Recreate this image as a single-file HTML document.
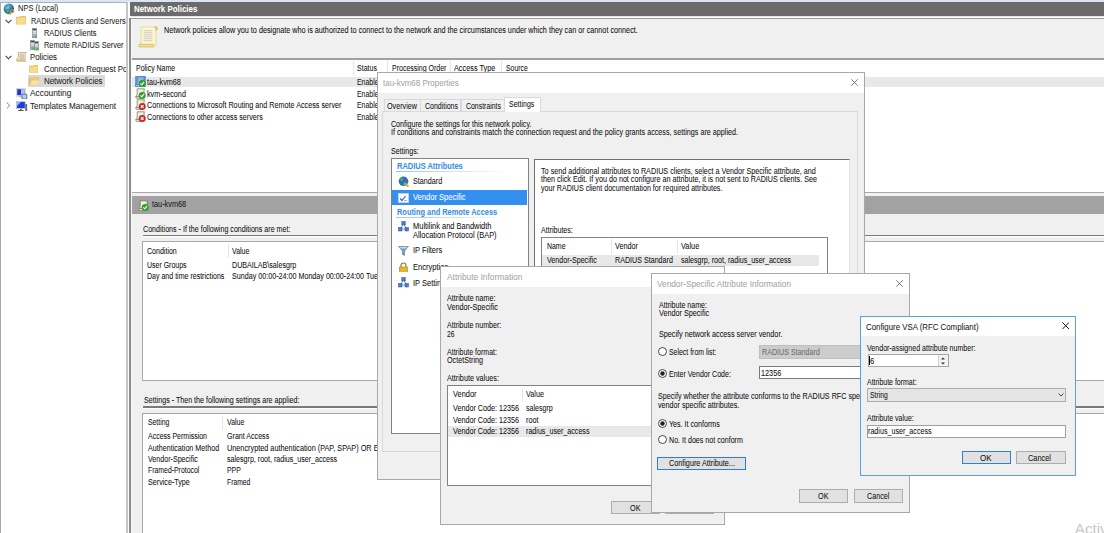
<!DOCTYPE html>
<html><head><meta charset="utf-8"><style>
html,body{margin:0;padding:0;}
body{width:1104px;height:533px;position:relative;overflow:hidden;background:#fff;font-family:'Liberation Sans', sans-serif;}
.b{position:absolute;}
.t{position:absolute;white-space:pre;line-height:1;transform-origin:0 0;-webkit-text-stroke:0.06px currentColor;}
</style></head><body>
<div class="b" style="left:0px;top:0px;width:1104px;height:1.5px;background:#dbe6f2;"></div>
<div class="b" style="left:0px;top:1.5px;width:1104px;height:0.8px;background:#a9b0b8;"></div>
<div class="b" style="left:0px;top:2px;width:1.2px;height:531px;background:#a8a8a8;"></div>
<div class="b" style="left:125.9px;top:2px;width:2.1px;height:531px;background:#c3c5ca;"></div>
<div class="b" style="left:128px;top:2px;width:1.6px;height:531px;background:#ffffff;"></div>
<div class="b" style="left:27.6px;top:75.2px;width:77px;height:12.1px;background:#d9d9d9;"></div>
<span class="t" style="left:17.90px;top:4.41px;font-size:9.2px;color:#1e1e1e;transform:scaleX(0.8136);">NPS (Local)</span>
<span class="t" style="left:31.00px;top:16.51px;font-size:9.2px;color:#1e1e1e;transform:scaleX(0.8055);">RADIUS Clients and Servers</span>
<span class="t" style="left:43.50px;top:28.61px;font-size:9.2px;color:#1e1e1e;transform:scaleX(0.8033);">RADIUS Clients</span>
<div class="b" style="left:0px;top:37.81px;width:124.5px;height:14.72px;overflow:hidden"><div class="b" style="left:0px;top:-37.81px"><span class="t" style="left:43.50px;top:40.81px;font-size:9.2px;color:#1e1e1e;transform:scaleX(0.8025);">Remote RADIUS Server</span></div></div>
<span class="t" style="left:30.40px;top:52.91px;font-size:9.2px;color:#1e1e1e;transform:scaleX(0.8525);">Policies</span>
<div class="b" style="left:0px;top:62.11px;width:126.3px;height:14.72px;overflow:hidden"><div class="b" style="left:0px;top:-62.11px"><span class="t" style="left:43.50px;top:65.11px;font-size:9.2px;color:#1e1e1e;transform:scaleX(0.8604);">Connection Request Po</span></div></div>
<span class="t" style="left:43.50px;top:77.21px;font-size:9.2px;color:#1e1e1e;transform:scaleX(0.8615);">Network Policies</span>
<span class="t" style="left:30.40px;top:89.41px;font-size:9.2px;color:#1e1e1e;transform:scaleX(0.9083);">Accounting</span>
<span class="t" style="left:30.40px;top:101.51px;font-size:9.2px;color:#1e1e1e;transform:scaleX(0.8770);">Templates Management</span>
<svg class="b" style="left:4.699999999999999px;top:18.7px;" width="7" height="5" viewBox="0 0 7 5"><path d="M0.6 0.8 L3.5 3.8 L6.4 0.8" fill="none" stroke="#404040" stroke-width="1.1"/></svg>
<svg class="b" style="left:4.699999999999999px;top:55.1px;" width="7" height="5" viewBox="0 0 7 5"><path d="M0.6 0.8 L3.5 3.8 L6.4 0.8" fill="none" stroke="#404040" stroke-width="1.1"/></svg>
<svg class="b" style="left:5.9px;top:102.3px;" width="5" height="7" viewBox="0 0 5 7"><path d="M0.8 0.6 L3.8 3.5 L0.8 6.4" fill="none" stroke="#808080" stroke-width="1"/></svg>
<svg class="b" style="left:3px;top:3px;" width="12" height="12" viewBox="0 0 12 12"><defs><radialGradient id="gg" cx="0.35" cy="0.3" r="0.75"><stop offset="0" stop-color="#a8d4ff"/><stop offset="0.5" stop-color="#2f78d0"/><stop offset="1" stop-color="#1a3f8a"/></radialGradient></defs><circle cx="5.8" cy="5.8" r="5.2" fill="url(#gg)"/><path d="M2 3.2 Q3.5 1.5 5.5 2.2 Q5 4 3.5 4.6 Q2.3 5 1.4 4.5 Z M3.5 7 Q5.5 6.2 6.8 7.8 Q6 10.5 4 10.2 Q2.8 9 3.5 7 Z M7.5 2.5 Q9.5 3 9.8 4.5 Q8.5 4.8 7.6 3.8 Z" fill="#3fb84a"/><circle cx="9.3" cy="8.2" r="1.5" fill="none" stroke="#e3a53a" stroke-width="1.1"/><path d="M8.2 9.3 L5.8 11.5 M6.8 10.6 L7.6 11.4" stroke="#e3a53a" stroke-width="1.2"/></svg>
<svg class="b" style="left:16px;top:16.2px;" width="10" height="8.5" viewBox="0 0 10 8.5"><path d="M0.5 1.2 H4 L5 0.3 H9.5 V8.0 H0.5 Z" fill="#f3d27a" stroke="#d9b45a" stroke-width="0.8"/><rect x="0.5" y="2" width="9.0" height="6.0" fill="#f7dc8c"/></svg>
<svg class="b" style="left:29px;top:64.9px;" width="9.3" height="8.3" viewBox="0 0 9.3 8.3"><path d="M0.5 1.2 H4 L5 0.3 H8.8 V7.800000000000001 H0.5 Z" fill="#f3d27a" stroke="#d9b45a" stroke-width="0.8"/><rect x="0.5" y="2" width="8.3" height="5.8" fill="#f7dc8c"/></svg>
<svg class="b" style="left:29px;top:76.6px;" width="10.3" height="8.8" viewBox="0 0 10.3 8.8"><path d="M0.5 1.2 H4 L5 0.3 H9.8 V8.3 H0.5 Z" fill="#f3d27a" stroke="#d9b45a" stroke-width="0.8"/><path d="M0.5 8.3 L2.5 3 H10.8 L9.8 8.3 Z" fill="#fbe49c" stroke="#d9b45a" stroke-width="0.6"/></svg>
<svg class="b" style="left:31.9px;top:28px;" width="5.2" height="10.2" viewBox="0 0 5.2 10.2"><rect x="0.4" y="0.4" width="4.4" height="9.399999999999999" fill="#a9b0b8" stroke="#7d858e" stroke-width="0.6"/><rect x="0.9" y="0.9" width="3.4000000000000004" height="1.4" fill="#3e4650"/><rect x="0.9" y="2.8" width="3.4000000000000004" height="1" fill="#f4f6f8"/><rect x="0.9" y="4.6" width="3.4000000000000004" height="1" fill="#f4f6f8"/><rect x="2.6" y="7.6" width="2" height="2" fill="#36c036"/></svg>
<svg class="b" style="left:30.1px;top:40.1px;" width="5" height="10" viewBox="0 0 5 10"><rect x="0.4" y="0.4" width="4.2" height="9.2" fill="#a9b0b8" stroke="#7d858e" stroke-width="0.6"/><rect x="0.9" y="0.9" width="3.2" height="1.4" fill="#3e4650"/><rect x="0.9" y="2.8" width="3.2" height="1" fill="#f4f6f8"/><rect x="0.9" y="4.6" width="3.2" height="1" fill="#f4f6f8"/><rect x="2.4" y="7.4" width="2" height="2" fill="#36c036"/></svg>
<svg class="b" style="left:34px;top:41px;" width="4.8" height="9.5" viewBox="0 0 4.8 9.5"><rect x="0.4" y="0.4" width="4.0" height="8.7" fill="#a9b0b8" stroke="#7d858e" stroke-width="0.6"/><rect x="0.9" y="0.9" width="3.0" height="1.4" fill="#3e4650"/><rect x="0.9" y="2.8" width="3.0" height="1" fill="#f4f6f8"/><rect x="0.9" y="4.6" width="3.0" height="1" fill="#f4f6f8"/><rect x="2.1999999999999997" y="6.9" width="2" height="2" fill="#36c036"/></svg>
<svg class="b" style="left:16.4px;top:52px;" width="10.8" height="10" viewBox="0 0 10.8 10"><path d="M2.3760000000000003 0.5 H10.3 L9.18 2.0 V8.2 H0.5 Q1.08 6.0 2.3760000000000003 5.0 Z" fill="#f3ebc8" stroke="#bfae78" stroke-width="0.8"/><path d="M0.5 8.2 H8.64 L9.72 9.5 H1.5 Z" fill="#e9dca8" stroke="#bfae78" stroke-width="0.6"/><rect x="3.4560000000000004" y="1.7999999999999998" width="4.5360000000000005" height="0.6" fill="#b8b0a0"/><rect x="3.4560000000000004" y="2.8" width="4.5360000000000005" height="0.6" fill="#b8b0a0"/><rect x="3.4560000000000004" y="3.8" width="4.5360000000000005" height="0.6" fill="#b8b0a0"/><rect x="3.4560000000000004" y="4.8" width="4.5360000000000005" height="0.6" fill="#b8b0a0"/><rect x="3.4560000000000004" y="5.8" width="4.5360000000000005" height="0.6" fill="#b8b0a0"/><rect x="3.4560000000000004" y="6.8" width="4.5360000000000005" height="0.6" fill="#b8b0a0"/></svg>
<svg class="b" style="left:16px;top:87.8px;" width="11.5" height="11.5" viewBox="0 0 11.5 11.5"><rect x="0.3" y="0.3" width="9" height="8" fill="#efe9d8" stroke="#c9c2ad" stroke-width="0.5"/><rect x="1.2" y="1.2" width="7.2" height="6" fill="#1d35d8"/><rect x="5" y="1.2" width="3.4" height="6" fill="#a9c2f5"/><rect x="3" y="8.3" width="3.5" height="1.2" fill="#bbb"/><rect x="5.8" y="6" width="5.2" height="5.2" rx="0.6" fill="#7f9cc8" stroke="#4a6290" stroke-width="0.5"/><rect x="6.8" y="7" width="3.2" height="3.2" fill="#b9cce8"/></svg>
<svg class="b" style="left:16px;top:100.8px;" width="11.5" height="10.5" viewBox="0 0 11.5 10.5"><rect x="0.3" y="0.3" width="9.2" height="7.4" fill="#dfe6ee" stroke="#9aa4b0" stroke-width="0.5"/><rect x="1" y="1" width="7.8" height="6" fill="#1e3fe0"/><path d="M1 1 H5 L1 5 Z" fill="#8fb0ff"/><rect x="4" y="7.8" width="1.8" height="1.2" fill="#666"/><rect x="2.2" y="9" width="5.4" height="1" fill="#555"/><rect x="9.2" y="3" width="1.9" height="7" fill="#6b6e72"/></svg>
<div class="b" style="left:129.6px;top:1.7px;width:974.4px;height:14.1px;background:#6b6b6b;"></div>
<span class="t" style="left:134.20px;top:4.81px;font-size:9.2px;color:#ffffff;font-weight:bold;transform:scaleX(0.8609);">Network Policies</span>
<div class="b" style="left:131px;top:15.8px;width:973px;height:1.7px;background:#e6e6e6;"></div>
<div class="b" style="left:131px;top:17.5px;width:973px;height:1px;background:#9a9a9a;"></div>
<div class="b" style="left:131.2px;top:18.5px;width:973px;height:40px;background:#f0f0f0;"></div>
<div class="b" style="left:131.2px;top:58.4px;width:973px;height:1.3px;background:#a0a0a0;"></div>
<svg class="b" style="left:138px;top:25.5px;" width="21" height="22" viewBox="0 0 21 22"><rect x="3" y="1" width="15" height="18" fill="#fbf6d2" stroke="#e3d595" stroke-width="0.8"/><path d="M16.5 0.8 Q20 0.5 19.5 3 Q19 5 17.5 4.5" fill="#e6cf6a" stroke="#cbb24a" stroke-width="0.6"/><path d="M1 18.3 H15.5 Q16.5 19.5 15.5 21 H1.5 Q0 19.6 1 18.3 Z" fill="#f2df86" stroke="#d0ba58" stroke-width="0.7"/><rect x="5.6" y="4.4" width="8.8" height="0.75" fill="#c0bec4"/><rect x="5.6" y="6.4" width="8.8" height="0.75" fill="#c0bec4"/><rect x="5.6" y="8.4" width="8.8" height="0.75" fill="#c0bec4"/><rect x="5.6" y="10.4" width="8.8" height="0.75" fill="#c0bec4"/><rect x="5.6" y="12.4" width="8.8" height="0.75" fill="#c0bec4"/><rect x="5.6" y="14.4" width="8.8" height="0.75" fill="#c0bec4"/></svg>
<span class="t" style="left:164.40px;top:26.40px;font-size:8.5px;color:#111;transform:scaleX(0.8512);">Network policies allow you to designate who is authorized to connect to the network and the circumstances under which they can or cannot connect.</span>
<span class="t" style="left:136.00px;top:64.40px;font-size:8.5px;color:#111;transform:scaleX(0.8215);">Policy Name</span>
<span class="t" style="left:357.20px;top:64.40px;font-size:8.5px;color:#111;transform:scaleX(0.8254);">Status</span>
<span class="t" style="left:391.60px;top:64.40px;font-size:8.5px;color:#111;transform:scaleX(0.8225);">Processing Order</span>
<span class="t" style="left:454.10px;top:64.40px;font-size:8.5px;color:#111;transform:scaleX(0.8596);">Access Type</span>
<span class="t" style="left:505.80px;top:64.40px;font-size:8.5px;color:#111;transform:scaleX(0.8056);">Source</span>
<div class="b" style="left:352.7px;top:60.5px;width:0.8px;height:15px;background:#e5e5e5;"></div>
<div class="b" style="left:387.1px;top:60.5px;width:0.8px;height:15px;background:#e5e5e5;"></div>
<div class="b" style="left:449.6px;top:60.5px;width:0.8px;height:15px;background:#e5e5e5;"></div>
<div class="b" style="left:501.2px;top:60.5px;width:0.8px;height:15px;background:#e5e5e5;"></div>
<div class="b" style="left:131.2px;top:76.5px;width:973px;height:10.5px;background:#e8e8e8;"></div>
<span class="t" style="left:146.50px;top:78.00px;font-size:8.5px;color:#111;transform:scaleX(0.8542);">tau-kvm68</span>
<span class="t" style="left:146.50px;top:89.60px;font-size:8.5px;color:#111;transform:scaleX(0.8488);">kvm-second</span>
<span class="t" style="left:146.50px;top:101.20px;font-size:8.5px;color:#111;transform:scaleX(0.8488);">Connections to Microsoft Routing and Remote Access server</span>
<span class="t" style="left:146.50px;top:112.60px;font-size:8.5px;color:#111;transform:scaleX(0.8416);">Connections to other access servers</span>
<span class="t" style="left:357.20px;top:78.00px;font-size:8.5px;color:#111;transform:scaleX(0.8123);">Enable</span>
<span class="t" style="left:357.20px;top:89.60px;font-size:8.5px;color:#111;transform:scaleX(0.8123);">Enable</span>
<span class="t" style="left:357.20px;top:101.20px;font-size:8.5px;color:#111;transform:scaleX(0.8123);">Enable</span>
<span class="t" style="left:357.20px;top:112.60px;font-size:8.5px;color:#111;transform:scaleX(0.8123);">Enable</span>
<svg class="b" style="left:135.4px;top:76.2px;" width="11" height="11" viewBox="0 0 11 11"><rect x="0" y="0" width="11" height="11" fill="#6d9fdc"/><path d="M2.2 0.8 H9.5 L9 2 V8.5 H1.2 Q2 7 2.2 6 Z" fill="#8fb6e6" stroke="#3f6fb0" stroke-width="0.7"/><path d="M0.5 8.5 H7.5 L8 10.5 H1.2 Z" fill="#a9c6ea" stroke="#3f6fb0" stroke-width="0.5"/><circle cx="7.2" cy="7.4" r="3.5" fill="#2aa02a"/><path d="M5.4 7.4 L6.8 8.9 L9.1 5.9" fill="none" stroke="#fff" stroke-width="1.1"/></svg>
<svg class="b" style="left:135.4px;top:87.8px;" width="11" height="11" viewBox="0 0 11 11"><path d="M2.2 0.8 H9.5 L9 2 V8.5 H1.2 Q2 7 2.2 6 Z" fill="#f1efe2" stroke="#6a6a5a" stroke-width="0.7"/><path d="M0.5 8.5 H7.5 L8 10.5 H1.2 Z" fill="#e3dcb8" stroke="#6a6a5a" stroke-width="0.5"/><circle cx="7.2" cy="7.4" r="3.5" fill="#2aa02a"/><path d="M5.4 7.4 L6.8 8.9 L9.1 5.9" fill="none" stroke="#fff" stroke-width="1.1"/></svg>
<svg class="b" style="left:135.4px;top:99.3px;" width="11" height="11" viewBox="0 0 11 11"><path d="M2.2 0.8 H9.5 L9 2 V8.5 H1.2 Q2 7 2.2 6 Z" fill="#f1efe2" stroke="#6a6a5a" stroke-width="0.7"/><path d="M0.5 8.5 H7.5 L8 10.5 H1.2 Z" fill="#e3dcb8" stroke="#6a6a5a" stroke-width="0.5"/><circle cx="7.2" cy="7.5" r="3.5" fill="#d02424"/><path d="M5.8 6.1 L8.6 8.9 M8.6 6.1 L5.8 8.9" stroke="#fff" stroke-width="1.1"/></svg>
<svg class="b" style="left:135.4px;top:110.9px;" width="11" height="11" viewBox="0 0 11 11"><path d="M2.2 0.8 H9.5 L9 2 V8.5 H1.2 Q2 7 2.2 6 Z" fill="#f1efe2" stroke="#6a6a5a" stroke-width="0.7"/><path d="M0.5 8.5 H7.5 L8 10.5 H1.2 Z" fill="#e3dcb8" stroke="#6a6a5a" stroke-width="0.5"/><circle cx="7.2" cy="7.5" r="3.5" fill="#d02424"/><path d="M5.8 6.1 L8.6 8.9 M8.6 6.1 L5.8 8.9" stroke="#fff" stroke-width="1.1"/></svg>
<div class="b" style="left:131.2px;top:58.4px;width:973px;height:133.6px;"></div>
<div class="b" style="left:131.2px;top:192px;width:973px;height:1px;background:#a8a8a8;"></div>
<div class="b" style="left:131.2px;top:193px;width:973px;height:2.5px;background:#f0f0f0;"></div>
<div class="b" style="left:131.2px;top:195.5px;width:973px;height:18.2px;background:#a2a2a2;"></div>
<svg class="b" style="left:138px;top:199.5px;" width="11" height="11" viewBox="0 0 11 11"><path d="M2.2 0.8 H9.5 L9 2 V8.5 H1.2 Q2 7 2.2 6 Z" fill="#f1efe2" stroke="#6a6a5a" stroke-width="0.7"/><path d="M0.5 8.5 H7.5 L8 10.5 H1.2 Z" fill="#e3dcb8" stroke="#6a6a5a" stroke-width="0.5"/><circle cx="7.2" cy="7.4" r="3.5" fill="#2aa02a"/><path d="M5.4 7.4 L6.8 8.9 L9.1 5.9" fill="none" stroke="#fff" stroke-width="1.1"/></svg>
<span class="t" style="left:151.80px;top:200.20px;font-size:8.5px;color:#1a1a1a;transform:scaleX(0.8617);">tau-kvm68</span>
<div class="b" style="left:131.2px;top:213.7px;width:973px;height:320px;background:#f0f0f0;"></div>
<span class="t" style="left:143.20px;top:224.60px;font-size:8.5px;color:#111;transform:scaleX(0.8364);">Conditions - If the following conditions are met:</span>
<div class="b" style="left:143px;top:234.6px;width:961px;height:1.4px;background:#7a7a7a;"></div>
<div class="b" style="left:143px;top:236px;width:961px;height:0.8px;background:#ffffff;"></div>
<div class="b" style="left:142.1px;top:241.2px;width:970px;height:140.3px;background:#ffffff;border:1px solid #a9a9a9;box-sizing:border-box;"></div>
<span class="t" style="left:147.30px;top:246.70px;font-size:8.5px;color:#111;transform:scaleX(0.8296);">Condition</span>
<span class="t" style="left:232.00px;top:246.70px;font-size:8.5px;color:#111;transform:scaleX(0.8243);">Value</span>
<div class="b" style="left:227.6px;top:244px;width:0.8px;height:14px;background:#e5e5e5;"></div>
<span class="t" style="left:147.30px;top:260.50px;font-size:8.5px;color:#111;transform:scaleX(0.8218);">User Groups</span>
<span class="t" style="left:232.00px;top:260.50px;font-size:8.5px;color:#111;transform:scaleX(0.8400);">DUBAILAB\salesgrp</span>
<span class="t" style="left:147.30px;top:272.10px;font-size:8.5px;color:#111;transform:scaleX(0.8274);">Day and time restrictions</span>
<span class="t" style="left:232.00px;top:272.10px;font-size:8.5px;color:#111;transform:scaleX(0.8418);">Sunday 00:00-24:00 Monday 00:00-24:00 Tue</span>
<span class="t" style="left:144.00px;top:396.00px;font-size:8.5px;color:#111;transform:scaleX(0.8375);">Settings - Then the following settings are applied:</span>
<div class="b" style="left:143px;top:406.2px;width:961px;height:1.4px;background:#7a7a7a;"></div>
<div class="b" style="left:143px;top:407.6px;width:961px;height:0.8px;background:#ffffff;"></div>
<div class="b" style="left:142.3px;top:412.8px;width:970px;height:130px;background:#ffffff;border:1px solid #a9a9a9;box-sizing:border-box;"></div>
<span class="t" style="left:148.00px;top:418.40px;font-size:8.5px;color:#111;transform:scaleX(0.8047);">Setting</span>
<span class="t" style="left:226.50px;top:418.40px;font-size:8.5px;color:#111;transform:scaleX(0.8243);">Value</span>
<div class="b" style="left:222.2px;top:416px;width:0.8px;height:14px;background:#e5e5e5;"></div>
<span class="t" style="left:148.00px;top:432.20px;font-size:8.5px;color:#111;transform:scaleX(0.8216);">Access Permission</span>
<span class="t" style="left:226.50px;top:432.20px;font-size:8.5px;color:#111;transform:scaleX(0.8346);">Grant Access</span>
<span class="t" style="left:148.00px;top:443.50px;font-size:8.5px;color:#111;transform:scaleX(0.8417);">Authentication Method</span>
<span class="t" style="left:226.50px;top:443.50px;font-size:8.5px;color:#111;transform:scaleX(0.8574);">Unencrypted authentication (PAP, SPAP) OR E</span>
<span class="t" style="left:148.00px;top:455.10px;font-size:8.5px;color:#111;transform:scaleX(0.8363);">Vendor-Specific</span>
<span class="t" style="left:226.50px;top:455.10px;font-size:8.5px;color:#111;transform:scaleX(0.8352);">salesgrp, root, radius_user_access</span>
<span class="t" style="left:148.00px;top:466.40px;font-size:8.5px;color:#111;transform:scaleX(0.8103);">Framed-Protocol</span>
<span class="t" style="left:226.50px;top:466.40px;font-size:8.5px;color:#111;transform:scaleX(0.8110);">PPP</span>
<span class="t" style="left:148.00px;top:478.10px;font-size:8.5px;color:#111;transform:scaleX(0.8426);">Service-Type</span>
<span class="t" style="left:226.50px;top:478.10px;font-size:8.5px;color:#111;transform:scaleX(0.7953);">Framed</span>
<div class="b" style="left:129.3px;top:17.5px;width:1.8px;height:516px;background:#8c8c8c;"></div>
<div class="b" style="left:131.1px;top:18.5px;width:0.9px;height:515px;background:#f7f7f7;"></div>
<div class="b" style="left:377px;top:72px;width:487.5px;height:407.5px;background:#f0f0f0;border:1px solid #a8a8a8;box-sizing:border-box;"></div>
<div class="b" style="left:378px;top:73px;width:485.5px;height:20px;background:#ffffff;"></div>
<span class="t" style="left:383.00px;top:78.55px;font-size:8.8px;color:#a6a6a6;transform:scaleX(0.9054);">tau-kvm68 Properties</span>
<svg class="b" style="left:850.6px;top:79.1px;" width="7" height="7" viewBox="0 0 7 7"><path d="M0.3 0.3 L6.7 6.7 M6.7 0.3 L0.3 6.7" stroke="#707070" stroke-width="0.9"/></svg>
<div class="b" style="left:382px;top:110.9px;width:476.2px;height:341.3px;background:#f0f0f0;border:1px solid #d9d9d9;box-sizing:border-box;"></div>
<div class="b" style="left:384px;top:98.8px;width:36.69999999999999px;height:13.2px;background:#f0f0f0;border:1px solid #d9d9d9;box-sizing:border-box;"></div>
<span class="t" style="left:386.70px;top:101.55px;font-size:8.8px;color:#111;transform:scaleX(0.8153);">Overview</span>
<div class="b" style="left:419.7px;top:98.8px;width:41.80000000000001px;height:13.2px;background:#f0f0f0;border:1px solid #d9d9d9;box-sizing:border-box;"></div>
<span class="t" style="left:424.80px;top:101.55px;font-size:8.8px;color:#111;transform:scaleX(0.7937);">Conditions</span>
<div class="b" style="left:460.5px;top:98.8px;width:44.5px;height:13.2px;background:#f0f0f0;border:1px solid #d9d9d9;box-sizing:border-box;"></div>
<span class="t" style="left:465.90px;top:101.55px;font-size:8.8px;color:#111;transform:scaleX(0.7865);">Constraints</span>
<div class="b" style="left:504px;top:97.1px;width:36.5px;height:14.9px;background:#ffffff;border:1px solid #d9d9d9;box-sizing:border-box;border-bottom:none;"></div>
<span class="t" style="left:509.40px;top:100.45px;font-size:8.8px;color:#111;transform:scaleX(0.7957);">Settings</span>
<span class="t" style="left:390.50px;top:119.65px;font-size:8.8px;color:#111;transform:scaleX(0.8050);">Configure the settings for this network policy.</span>
<span class="t" style="left:390.50px;top:127.95px;font-size:8.8px;color:#111;transform:scaleX(0.8185);">If conditions and constraints match the connection request and the policy grants access, settings are applied.</span>
<span class="t" style="left:390.50px;top:147.15px;font-size:8.8px;color:#111;transform:scaleX(0.8120);">Settings:</span>
<div class="b" style="left:391px;top:158.1px;width:138.2px;height:275.6px;background:#ffffff;border:1px solid #828282;box-sizing:border-box;"></div>
<span class="t" style="left:396.70px;top:161.65px;font-size:8.8px;color:#3a8ee6;font-weight:bold;transform:scaleX(0.8489);">RADIUS Attributes</span>
<div class="b" style="left:396px;top:170.8px;width:112px;height:1px;background:linear-gradient(90deg,#9cc6f0,#ffffff);"></div>
<svg class="b" style="left:397.7px;top:176px;" width="11.5" height="11" viewBox="0 0 11.5 11"><circle cx="5.5" cy="5.3" r="4.8" fill="#2d6cc0"/><path d="M2.5 2.3 Q4.5 1.3 5.5 3 Q4.5 5.3 2.5 5.3 Z M5.5 6.5 Q7.5 5.5 8.5 7.5 Q6.5 10 5 9.5 Z" fill="#4cbb3c"/><path d="M7 7.5 L10.5 10.5" stroke="#e0a030" stroke-width="1.8"/></svg>
<span class="t" style="left:412.80px;top:176.75px;font-size:8.8px;color:#111;transform:scaleX(0.8179);">Standard</span>
<div class="b" style="left:392.3px;top:189.6px;width:134.9px;height:15.6px;background:#3390ee;"></div>
<svg class="b" style="left:397.7px;top:193px;" width="11" height="10" viewBox="0 0 11 10"><rect x="0.5" y="0.5" width="10" height="9" fill="#ffffff" stroke="#c9d3e0" stroke-width="0.8"/><path d="M2.2 5.5 L4 7.5 L7.5 3" fill="none" stroke="#2466c4" stroke-width="1.2"/><rect x="6" y="7" width="3" height="0.8" fill="#999"/></svg>
<span class="t" style="left:412.80px;top:192.65px;font-size:8.8px;color:#ffffff;transform:scaleX(0.8587);">Vendor Specific</span>
<span class="t" style="left:396.70px;top:207.75px;font-size:8.8px;color:#3a8ee6;font-weight:bold;transform:scaleX(0.8423);">Routing and Remote Access</span>
<div class="b" style="left:396px;top:216.8px;width:112px;height:1px;background:linear-gradient(90deg,#9cc6f0,#ffffff);"></div>
<svg class="b" style="left:397.7px;top:221.4px;" width="11" height="11" viewBox="0 0 11 11"><path d="M5.5 2.5 L2.5 8 M5.5 2.5 L8.5 8 M2.5 8 H8.5" stroke="#6a7f9a" stroke-width="0.8" fill="none"/><rect x="3.8" y="0.5" width="3.5" height="3.5" fill="#4a7fd0" stroke="#2a4f90" stroke-width="0.5"/><rect x="0.5" y="6.5" width="3.5" height="3.5" fill="#4a7fd0" stroke="#2a4f90" stroke-width="0.5"/><rect x="7" y="6.5" width="3.5" height="3.5" fill="#4a7fd0" stroke="#2a4f90" stroke-width="0.5"/></svg>
<span class="t" style="left:412.80px;top:221.85px;font-size:8.8px;color:#111;transform:scaleX(0.8494);">Multilink and Bandwidth</span>
<span class="t" style="left:412.80px;top:230.55px;font-size:8.8px;color:#111;transform:scaleX(0.8464);">Allocation Protocol (BAP)</span>
<svg class="b" style="left:397.7px;top:246px;" width="11" height="10" viewBox="0 0 11 10"><path d="M0.5 0.5 H10.5 L6.5 5 V9.5 L4.5 8.5 V5 Z" fill="#7b9bbb" stroke="#5a7a9a" stroke-width="0.6"/><path d="M1.5 1 H9.5 L8 2.5 H3 Z" fill="#c8d8e8"/></svg>
<span class="t" style="left:412.80px;top:245.95px;font-size:8.8px;color:#111;transform:scaleX(0.8452);">IP Filters</span>
<svg class="b" style="left:399px;top:261.6px;" width="9" height="10.5" viewBox="0 0 9 10.5"><path d="M2 5 V3.5 A2.5 2.5 0 0 1 7 3.5 V5" fill="none" stroke="#8a7a40" stroke-width="1.2"/><rect x="0.5" y="5" width="8" height="5.3" fill="#e2b52a" stroke="#a88418" stroke-width="0.6"/></svg>
<span class="t" style="left:412.80px;top:262.55px;font-size:8.8px;color:#111;transform:scaleX(0.8589);">Encryption</span>
<svg class="b" style="left:397.7px;top:277px;" width="11" height="11" viewBox="0 0 11 11"><path d="M5.5 2.5 L2.5 8 M5.5 2.5 L8.5 8 M2.5 8 H8.5" stroke="#6a7f9a" stroke-width="0.8" fill="none"/><rect x="3.8" y="0.5" width="3.5" height="3.5" fill="#4a7fd0" stroke="#2a4f90" stroke-width="0.5"/><rect x="0.5" y="6.5" width="3.5" height="3.5" fill="#4a7fd0" stroke="#2a4f90" stroke-width="0.5"/><rect x="7" y="6.5" width="3.5" height="3.5" fill="#4a7fd0" stroke="#2a4f90" stroke-width="0.5"/></svg>
<span class="t" style="left:412.80px;top:278.55px;font-size:8.8px;color:#111;transform:scaleX(0.8492);">IP Settings</span>
<div class="b" style="left:533.6px;top:158.6px;width:316.2px;height:290px;background:#ffffff;border-top:1.6px solid #6e6e6e;border-left:1.6px solid #6e6e6e;border-right:1px solid #e3e3e3;box-sizing:border-box;"></div>
<span class="t" style="left:541.20px;top:166.75px;font-size:8.8px;color:#111;transform:scaleX(0.8204);">To send additional attributes to RADIUS clients, select a Vendor Specific attribute, and</span>
<span class="t" style="left:541.20px;top:175.35px;font-size:8.8px;color:#111;transform:scaleX(0.8168);">then click Edit. If you do not configure an attribute, it is not sent to RADIUS clients. See</span>
<span class="t" style="left:541.20px;top:183.65px;font-size:8.8px;color:#111;transform:scaleX(0.8082);">your RADIUS client documentation for required attributes.</span>
<span class="t" style="left:541.20px;top:226.05px;font-size:8.8px;color:#111;transform:scaleX(0.8028);">Attributes:</span>
<div class="b" style="left:541.2px;top:237.4px;width:287.3px;height:200px;background:#ffffff;border:1px solid #828282;box-sizing:border-box;"></div>
<span class="t" style="left:546.80px;top:242.25px;font-size:8.8px;color:#111;transform:scaleX(0.7883);">Name</span>
<span class="t" style="left:614.60px;top:242.25px;font-size:8.8px;color:#111;transform:scaleX(0.8246);">Vendor</span>
<span class="t" style="left:681.00px;top:242.25px;font-size:8.8px;color:#111;transform:scaleX(0.8372);">Value</span>
<div class="b" style="left:610.6px;top:239px;width:0.8px;height:15px;background:#e5e5e5;"></div>
<div class="b" style="left:677px;top:239px;width:0.8px;height:15px;background:#e5e5e5;"></div>
<div class="b" style="left:542.2px;top:254.7px;width:277px;height:11.5px;background:#e8e8e8;"></div>
<span class="t" style="left:546.80px;top:256.15px;font-size:8.8px;color:#111;transform:scaleX(0.8097);">Vendor-Specific</span>
<span class="t" style="left:614.60px;top:256.15px;font-size:8.8px;color:#111;transform:scaleX(0.8110);">RADIUS Standard</span>
<span class="t" style="left:681.00px;top:256.15px;font-size:8.8px;color:#111;transform:scaleX(0.8063);">salesgrp, root, radius_user_access</span>
<div class="b" style="left:440px;top:266px;width:284.5px;height:259px;background:#f0f0f0;border:1px solid #a8a8a8;box-sizing:border-box;"></div>
<div class="b" style="left:441px;top:267px;width:282.5px;height:19.5px;background:#ffffff;"></div>
<span class="t" style="left:446.90px;top:272.95px;font-size:8.8px;color:#a6a6a6;transform:scaleX(0.9518);">Attribute Information</span>
<span class="t" style="left:447.30px;top:294.05px;font-size:8.8px;color:#111;transform:scaleX(0.8130);">Attribute name:</span>
<span class="t" style="left:447.30px;top:302.65px;font-size:8.8px;color:#111;transform:scaleX(0.8260);">Vendor-Specific</span>
<span class="t" style="left:447.30px;top:320.85px;font-size:8.8px;color:#111;transform:scaleX(0.8046);">Attribute number:</span>
<span class="t" style="left:447.30px;top:329.75px;font-size:8.8px;color:#111;transform:scaleX(0.7656);">26</span>
<span class="t" style="left:447.30px;top:347.65px;font-size:8.8px;color:#111;transform:scaleX(0.7988);">Attribute format:</span>
<span class="t" style="left:447.30px;top:355.75px;font-size:8.8px;color:#111;transform:scaleX(0.8202);">OctetString</span>
<span class="t" style="left:447.30px;top:374.45px;font-size:8.8px;color:#111;transform:scaleX(0.8228);">Attribute values:</span>
<div class="b" style="left:447px;top:384.9px;width:270px;height:101.5px;background:#ffffff;border:1px solid #828282;box-sizing:border-box;"></div>
<span class="t" style="left:452.70px;top:390.15px;font-size:8.8px;color:#111;transform:scaleX(0.8426);">Vendor</span>
<span class="t" style="left:525.50px;top:390.15px;font-size:8.8px;color:#111;transform:scaleX(0.8234);">Value</span>
<div class="b" style="left:522px;top:388px;width:0.8px;height:14px;background:#e5e5e5;"></div>
<div class="b" style="left:448px;top:425.6px;width:268px;height:11.4px;background:#e8e8e8;"></div>
<span class="t" style="left:452.70px;top:404.15px;font-size:8.8px;color:#111;transform:scaleX(0.8189);">Vendor Code: 12356</span>
<span class="t" style="left:525.50px;top:404.15px;font-size:8.8px;color:#111;transform:scaleX(0.8056);">salesgrp</span>
<span class="t" style="left:452.70px;top:415.55px;font-size:8.8px;color:#111;transform:scaleX(0.8189);">Vendor Code: 12356</span>
<span class="t" style="left:525.50px;top:415.55px;font-size:8.8px;color:#111;transform:scaleX(0.8239);">root</span>
<span class="t" style="left:452.70px;top:427.15px;font-size:8.8px;color:#111;transform:scaleX(0.8189);">Vendor Code: 12356</span>
<span class="t" style="left:525.50px;top:427.15px;font-size:8.8px;color:#111;transform:scaleX(0.8115);">radius_user_access</span>
<div class="b" style="left:611px;top:500.7px;width:48.6px;height:13.8px;background:#e1e1e1;border:1px solid #adadad;box-sizing:border-box;"></div>
<span class="t" style="left:629.50px;top:503.75px;font-size:8.8px;color:#111;transform:scaleX(0.8256);">OK</span>
<div class="b" style="left:665.4px;top:500.7px;width:48.9px;height:13.8px;background:#e1e1e1;border:1px solid #adadad;box-sizing:border-box;"></div>
<div class="b" style="left:651.1px;top:272.8px;width:258.9px;height:240px;background:#f0f0f0;border:1px solid #a8a8a8;box-sizing:border-box;"></div>
<div class="b" style="left:652.1px;top:273.8px;width:256.9px;height:20.2px;background:#ffffff;"></div>
<span class="t" style="left:657.00px;top:279.65px;font-size:8.8px;color:#a6a6a6;transform:scaleX(0.9384);">Vendor-Specific Attribute Information</span>
<svg class="b" style="left:896.2px;top:279.7px;" width="7" height="7" viewBox="0 0 7 7"><path d="M0.3 0.3 L6.7 6.7 M6.7 0.3 L0.3 6.7" stroke="#707070" stroke-width="0.9"/></svg>
<span class="t" style="left:658.60px;top:301.05px;font-size:8.8px;color:#111;transform:scaleX(0.8046);">Attribute name:</span>
<span class="t" style="left:658.60px;top:309.15px;font-size:8.8px;color:#111;transform:scaleX(0.8211);">Vendor Specific</span>
<span class="t" style="left:658.60px;top:329.85px;font-size:8.8px;color:#111;transform:scaleX(0.8221);">Specify network access server vendor.</span>
<svg class="b" style="left:658.1px;top:347.3px;" width="9" height="9" viewBox="0 0 9 9"><circle cx="4.5" cy="4.5" r="4" fill="#ffffff" stroke="#333" stroke-width="0.9"/></svg>
<span class="t" style="left:669.40px;top:347.85px;font-size:8.8px;color:#111;transform:scaleX(0.7865);">Select from list:</span>
<div class="b" style="left:758.8px;top:345px;width:110px;height:13.8px;background:#cccccc;border:1px solid #bfbfbf;box-sizing:border-box;"></div>
<span class="t" style="left:761.70px;top:347.95px;font-size:8.8px;color:#6d6d6d;transform:scaleX(0.8110);">RADIUS Standard</span>
<svg class="b" style="left:658.1px;top:368.9px;" width="9" height="9" viewBox="0 0 9 9"><circle cx="4.5" cy="4.5" r="4" fill="#ffffff" stroke="#333" stroke-width="0.9"/><circle cx="4.5" cy="4.5" r="2.2" fill="#222"/></svg>
<span class="t" style="left:669.40px;top:369.75px;font-size:8.8px;color:#111;transform:scaleX(0.8010);">Enter Vendor Code:</span>
<div class="b" style="left:758.8px;top:366.4px;width:110px;height:13.1px;background:#ffffff;border:1px solid #7a7a7a;box-sizing:border-box;"></div>
<span class="t" style="left:760.60px;top:368.85px;font-size:8.8px;color:#111;transform:scaleX(0.8296);">12356</span>
<span class="t" style="left:658.20px;top:392.05px;font-size:8.8px;color:#111;transform:scaleX(0.8165);">Specify whether the attribute conforms to the RADIUS RFC spe</span>
<span class="t" style="left:658.20px;top:400.85px;font-size:8.8px;color:#111;transform:scaleX(0.8150);">vendor specific attributes.</span>
<svg class="b" style="left:658.1px;top:419.0px;" width="9" height="9" viewBox="0 0 9 9"><circle cx="4.5" cy="4.5" r="4" fill="#ffffff" stroke="#333" stroke-width="0.9"/><circle cx="4.5" cy="4.5" r="2.2" fill="#222"/></svg>
<span class="t" style="left:669.20px;top:419.65px;font-size:8.8px;color:#111;transform:scaleX(0.8096);">Yes. It conforms</span>
<svg class="b" style="left:658.1px;top:435.4px;" width="9" height="9" viewBox="0 0 9 9"><circle cx="4.5" cy="4.5" r="4" fill="#ffffff" stroke="#333" stroke-width="0.9"/></svg>
<span class="t" style="left:669.20px;top:435.95px;font-size:8.8px;color:#111;transform:scaleX(0.8082);">No. It does not conform</span>
<div class="b" style="left:657.3px;top:456.5px;width:88.7px;height:13.9px;background:#e1e1e1;border:1.3px solid #2f7bd6;box-sizing:border-box;"></div>
<span class="t" style="left:668.70px;top:459.35px;font-size:8.8px;color:#111;transform:scaleX(0.8217);">Configure Attribute...</span>
<div class="b" style="left:799.2px;top:489.4px;width:49.3px;height:13.9px;background:#e1e1e1;border:1px solid #adadad;box-sizing:border-box;"></div>
<span class="t" style="left:818.20px;top:492.25px;font-size:8.8px;color:#111;transform:scaleX(0.8256);">OK</span>
<div class="b" style="left:854.1px;top:489.4px;width:49.3px;height:13.9px;background:#e1e1e1;border:1px solid #adadad;box-sizing:border-box;"></div>
<span class="t" style="left:867.00px;top:492.25px;font-size:8.8px;color:#111;transform:scaleX(0.8141);">Cancel</span>
<div class="b" style="left:859.5px;top:315.7px;width:216.5px;height:160.6px;background:#f0f0f0;border:1px solid #5c9ee0;box-sizing:border-box;"></div>
<div class="b" style="left:860.5px;top:316.7px;width:214.5px;height:19.3px;background:#ffffff;"></div>
<span class="t" style="left:865.80px;top:321.59px;font-size:9.7px;color:#1a1a1a;transform:scaleX(0.8099);">Configure VSA (RFC Compliant)</span>
<svg class="b" style="left:1061.75px;top:321.85px;" width="7.5" height="7.5" viewBox="0 0 7.5 7.5"><path d="M0.3 0.3 L7.2 7.2 M7.2 0.3 L0.3 7.2" stroke="#111" stroke-width="1.0"/></svg>
<span class="t" style="left:866.90px;top:343.75px;font-size:8.8px;color:#111;transform:scaleX(0.8039);">Vendor-assigned attribute number:</span>
<div class="b" style="left:867.9px;top:353.8px;width:81px;height:13.1px;background:#ffffff;border:1px solid #a6a6a6;box-sizing:border-box;"></div>
<div class="b" style="left:938.3px;top:354.8px;width:9.6px;height:11.1px;background:#f2f2f2;border-left:1px solid #d0d0d0;box-sizing:border-box;"></div>
<svg class="b" style="left:940px;top:355.5px;" width="6" height="10" viewBox="0 0 6 10"><path d="M1 3.5 L3 1.5 L5 3.5 Z M1 6.5 L3 8.5 L5 6.5 Z" fill="#333"/></svg>
<span class="t" style="left:869.50px;top:356.65px;font-size:8.8px;color:#111;transform:scaleX(0.8764);">6</span>
<div class="b" style="left:869.3px;top:356px;width:0.6px;height:9px;background:#000;"></div>
<span class="t" style="left:866.90px;top:377.75px;font-size:8.8px;color:#111;transform:scaleX(0.7924);">Attribute format:</span>
<div class="b" style="left:866.9px;top:388.1px;width:198.9px;height:14px;background:#e5e5e5;border:1px solid #adadad;box-sizing:border-box;"></div>
<span class="t" style="left:869.60px;top:391.35px;font-size:8.8px;color:#111;transform:scaleX(0.7701);">String</span>
<svg class="b" style="left:1057.5px;top:393px;" width="6" height="4" viewBox="0 0 6 4"><path d="M0.5 0.5 L3 3 L5.5 0.5" fill="none" stroke="#333" stroke-width="0.9"/></svg>
<span class="t" style="left:867.00px;top:413.75px;font-size:8.8px;color:#111;transform:scaleX(0.7974);">Attribute value:</span>
<div class="b" style="left:866.5px;top:424.7px;width:199.3px;height:13.2px;background:#ffffff;border:1px solid #a0a0a0;box-sizing:border-box;"></div>
<span class="t" style="left:868.20px;top:427.25px;font-size:8.8px;color:#111;transform:scaleX(0.8128);">radius_user_access</span>
<div class="b" style="left:961.8px;top:451.1px;width:49.3px;height:13.4px;background:#e1e1e1;border:1.3px solid #2f7fd8;box-sizing:border-box;"></div>
<span class="t" style="left:979.80px;top:453.85px;font-size:8.8px;color:#111;transform:scaleX(0.9120);">OK</span>
<div class="b" style="left:1016.3px;top:451.1px;width:49.5px;height:13.4px;background:#e1e1e1;border:1px solid #adadad;box-sizing:border-box;"></div>
<span class="t" style="left:1028.40px;top:453.85px;font-size:8.8px;color:#111;transform:scaleX(0.8397);">Cancel</span>
<span class="t" style="left:1074.80px;top:521.43px;font-size:15.2px;color:#c8c8c8;-webkit-text-stroke:0;">Activate Windows</span>
</body></html>
